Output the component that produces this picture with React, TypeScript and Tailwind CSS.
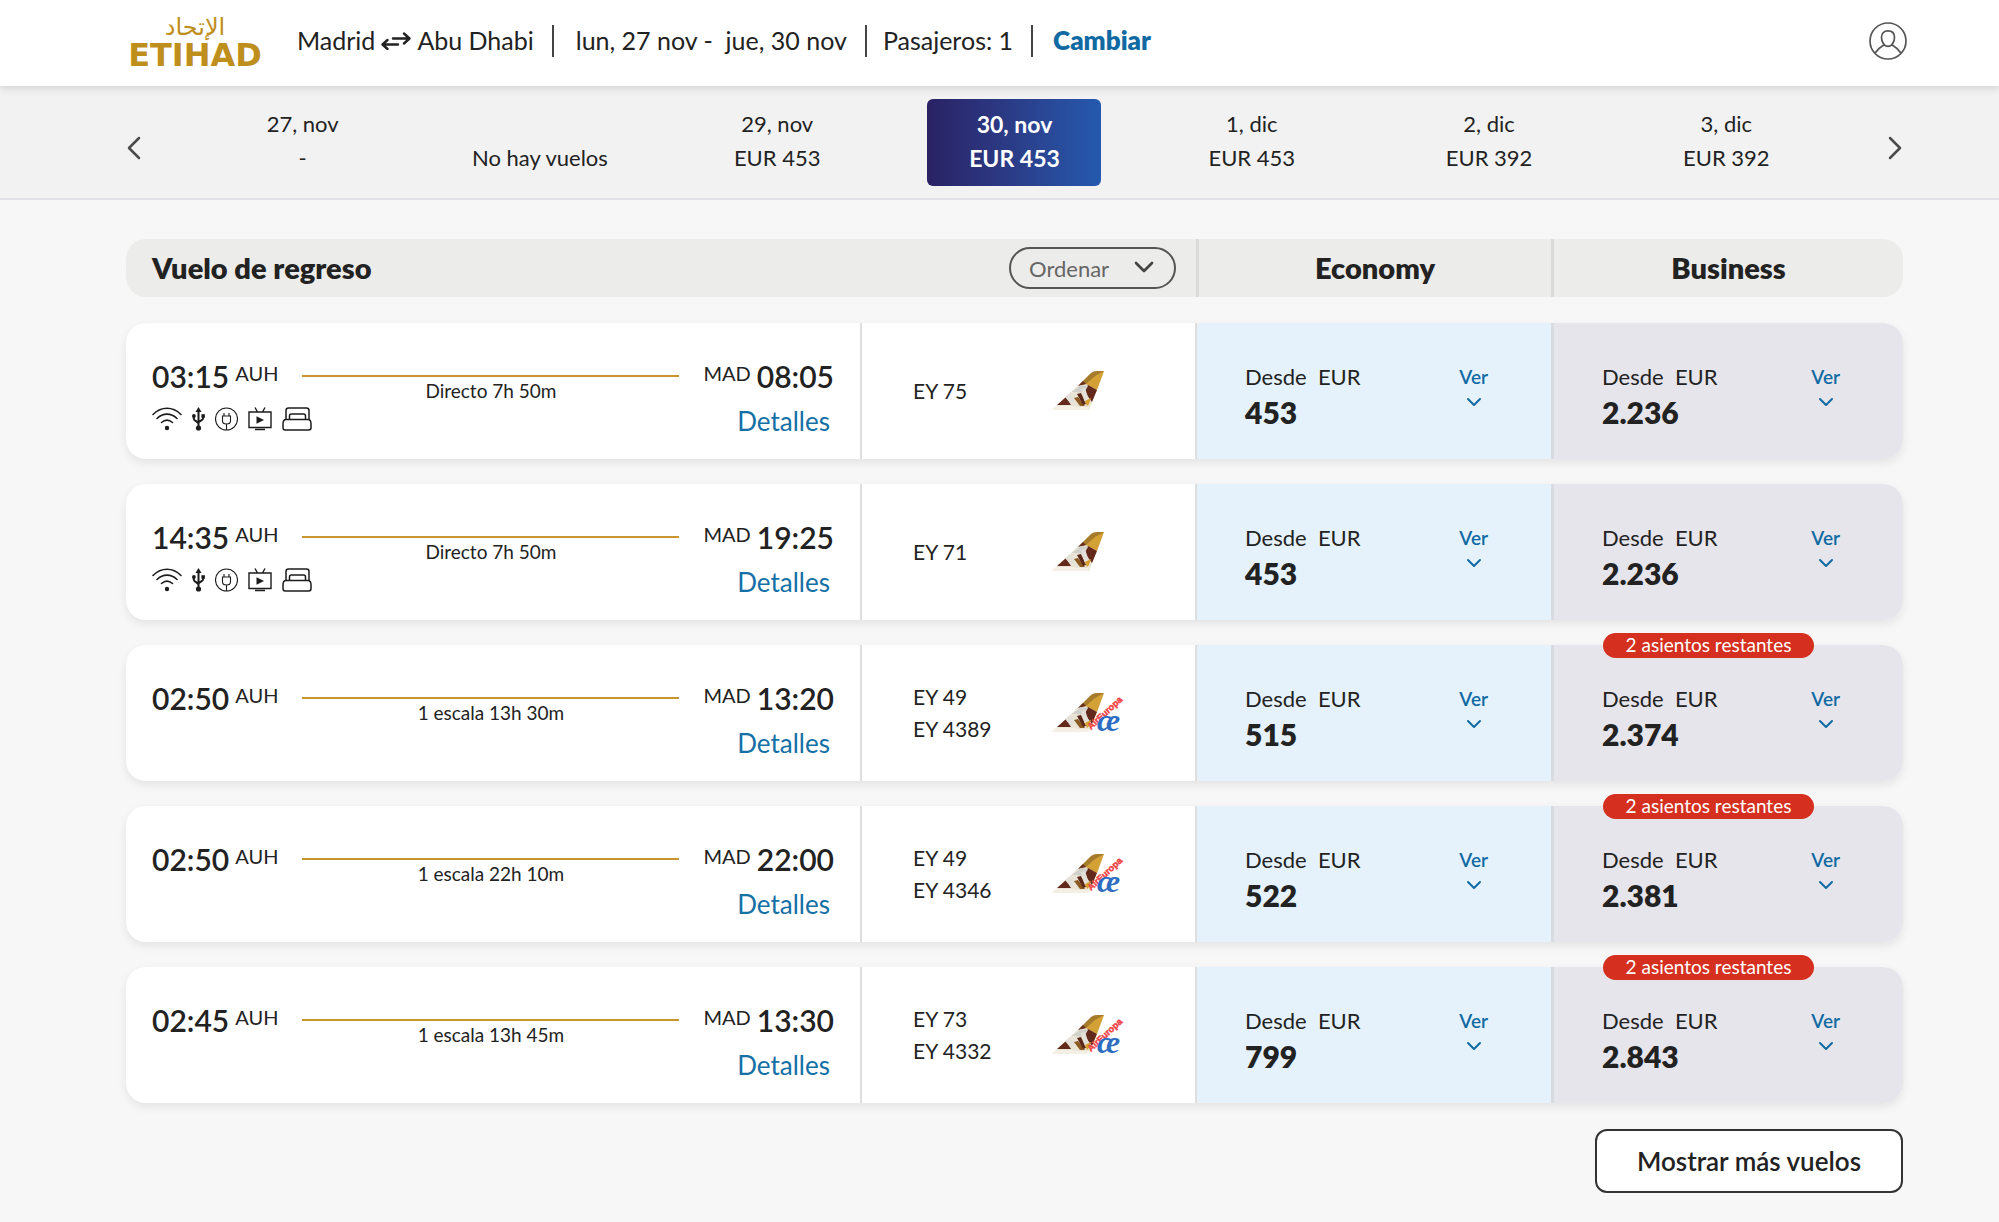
import { ChevronDown, ChevronLeft, ChevronRight } from "lucide-react"

type Flight = {
  departs: string
  arrives: string
  duration: string
  codes: string[]
  amenities?: boolean
  partner?: boolean
  economy: string
  business: string
  seatsLeft?: string
}

const days = [
  { label: "27, nov", price: "-" },
  { label: "", price: "No hay vuelos" },
  { label: "29, nov", price: "EUR 453" },
  { label: "30, nov", price: "EUR 453", selected: true },
  { label: "1, dic", price: "EUR 453" },
  { label: "2, dic", price: "EUR 392" },
  { label: "3, dic", price: "EUR 392" },
]

const flights: Flight[] = [
  {
    departs: "03:15",
    arrives: "08:05",
    duration: "Directo 7h 50m",
    codes: ["EY 75"],
    amenities: true,
    economy: "453",
    business: "2.236",
  },
  {
    departs: "14:35",
    arrives: "19:25",
    duration: "Directo 7h 50m",
    codes: ["EY 71"],
    amenities: true,
    economy: "453",
    business: "2.236",
  },
  {
    departs: "02:50",
    arrives: "13:20",
    duration: "1 escala 13h 30m",
    codes: ["EY 49", "EY 4389"],
    partner: true,
    economy: "515",
    business: "2.374",
    seatsLeft: "2 asientos restantes",
  },
  {
    departs: "02:50",
    arrives: "22:00",
    duration: "1 escala 22h 10m",
    codes: ["EY 49", "EY 4346"],
    partner: true,
    economy: "522",
    business: "2.381",
    seatsLeft: "2 asientos restantes",
  },
  {
    departs: "02:45",
    arrives: "13:30",
    duration: "1 escala 13h 45m",
    codes: ["EY 73", "EY 4332"],
    partner: true,
    economy: "799",
    business: "2.843",
    seatsLeft: "2 asientos restantes",
  },
]

function Logo() {
  return (
    <a href="#" className="flex w-[146px] flex-col items-center pb-1 font-['DejaVu_Sans'] text-[#bf8f1d]">
      <span lang="ar" dir="rtl" className="text-2xl leading-8">
        الإتحاد
      </span>
      <span className="text-[32px] font-bold leading-6">ETIHAD</span>
    </a>
  )
}

function SwapIcon() {
  return (
    <svg viewBox="0 0 30 18" className="h-[18px] w-[30px]" fill="none" stroke="currentColor" strokeWidth="2.4" strokeLinecap="round" strokeLinejoin="round">
      <path d="M12 6.500H28M23 1.500l5.500 5L23 11.500" />
      <path d="M17 12.500H2M6.500 8L1.500 12.500l5 4.500" />
    </svg>
  )
}

function ProfileIcon() {
  return (
    <svg viewBox="0 0 38 38" className="size-[38px]" fill="none" stroke="currentColor" strokeWidth="1.7">
      <circle cx="19" cy="19" r="18" />
      <path d="M19 8.800c4 0 6.500 2.500 6.500 6.600 0 4.300-2.600 9-6.500 9s-6.500-4.700-6.500-9c0-4.100 2.500-6.600 6.500-6.600z" />
      <path d="M15.500 22.500C12 24.500 8.500 27.500 6 31.200M22.500 22.500c3.500 2 7 5 9.500 8.700" />
    </svg>
  )
}

function Amenities() {
  return (
    <div className="flex items-center gap-2.5 text-[#1c1c1c]">
      <svg viewBox="0 0 30 24" className="h-6 w-[30px]" fill="none" stroke="currentColor" strokeWidth="1.6" strokeLinecap="round">
        <path d="M1 7.500C9.500-.8 20.500-.8 29 7.500M5 11.500c6-5.800 14-5.800 20 0M9.500 15.500c3.500-3 7.500-3 11 0" />
        <circle cx="15" cy="21" r="2.200" fill="currentColor" stroke="none" />
      </svg>
      <svg viewBox="0 0 13 24" className="h-6 w-[13px]" fill="none" stroke="currentColor" strokeWidth="2">
        <path d="M6.500 3v17M1.800 9v2.500c0 3 4.700 2.500 4.700 5.500M11.200 9v2c0 3-4.700 2.500-4.700 5" />
        <path d="M6.500 0l3 5h-6z" fill="currentColor" stroke="none" />
        <circle cx="6.500" cy="21" r="2.600" fill="currentColor" stroke="none" />
        <circle cx="1.900" cy="9" r="1.900" fill="currentColor" stroke="none" />
        <path d="M9.400 7.200h3.500v3.500H9.400z" fill="currentColor" stroke="none" />
      </svg>
      <svg viewBox="0 0 23 24" className="h-6 w-[23px]" fill="none" stroke="currentColor" strokeWidth="1.100">
        <circle cx="11.500" cy="12" r="11" />
        <path d="M9 9V6M14 9V6M7.500 9h8v5c0 2-1.500 3-4 3s-4-1-4-3zM11.500 17v6" />
      </svg>
      <svg viewBox="0 0 24 24" className="size-6" fill="none" stroke="currentColor" strokeWidth="1.400">
        <path d="M1 5h22v15.500H1zM7 .5L9.500 5M17 .5L14.500 5M7 22.500h10" />
        <path d="M8.500 9.200l7.500 3.800-7.500 3.800z" fill="currentColor" stroke="none" />
      </svg>
      <svg viewBox="0 0 30 24" className="h-6 w-[30px]" fill="none" stroke="currentColor" strokeWidth="1.500">
        <path d="M4 12.500V3.500c0-1.500.8-2.500 2.500-2.500h18c1.500 0 2.500 1 2.500 2.500v9" />
        <path d="M7.500 12.500V9c0-1.200.6-2 1.800-2h12.400c1.200 0 1.800.8 1.800 2v3.500" />
        <path d="M4 12.500h22c2 0 3 2 3 4.500v3.500c0 1.500-.7 2.500-2.200 2.500H3.200C1.700 23 1 22 1 20.500V17c0-2.500 1-4.500 3-4.500z" />
      </svg>
    </div>
  )
}

function Tails({ partner }: { partner?: boolean }) {
  return (
    <svg viewBox="0 0 80 40" className="h-10 w-20 overflow-visible">
      <path d="M0 39L38 3c2-2 4-3 7-3h7L37 39z" fill="#e9e4d6" />
      <path d="M27 14L38 3c2-2 4-3 7-3h7l-4 4-13 9z" fill="#a67c2c" />
      <path d="M52 0l-7 19-11-6 9-8z" fill="#d3a135" />
      <path d="M34 13l-8 2 5-5z" fill="#6b2f1d" />
      <path d="M36 14l9 5-5 12-8-11z" fill="#63291a" />
      <path d="M20 21l9-7 7 1-4 7-7-1z" fill="#d2d0ca" />
      <path d="M5 34l9-8 5 8z" fill="#63291a" />
      <path d="M13 26l5-4 5 6-4 5z" fill="#e4e1d9" />
      <path d="M22 27l4-1 7 9h-5z" fill="#8b5a20" />
      <path d="M25 23l4-1 5 11-3 1z" fill="#5a2718" />
      <path d="M29 18l4-1 4 12-4 2z" fill="#e3e0da" />
      <path d="M33 30l6-3-2 6-2 2z" fill="#d99f2a" />
      <path d="M0 39l4-4h16l8 1h9l-1 3z" fill="#f3efe4" />
      {partner && (
        <>
          <path d="M35 39L50 17 76 1 62 39z" fill="#ffffff" fillOpacity="0.5" />
          <text x="39" y="37" transform="rotate(-43 39 37)" className="font-['Liberation_Sans'] text-[9px] font-bold" fill="#f04444" stroke="#f04444" strokeWidth="0.5">
            AirEuropa
          </text>
          <text x="45" y="38" className="font-['Liberation_Serif'] text-[32px] font-bold italic" fill="#2e6cc0">
            æ
          </text>
        </>
      )}
    </svg>
  )
}

function Fare({ price }: { price: string }) {
  return (
    <div className="flex items-start justify-between pl-12 pr-[63px] pt-9">
      <div>
        <p className="whitespace-pre text-[22px] leading-9">Desde  EUR</p>
        <p className="text-[30px] font-extrabold leading-[34px]">{price}</p>
      </div>
      <button type="button" className="flex flex-col items-center pt-[5px] text-[#0f6aa3]">
        <span className="text-[19px] font-semibold leading-[26px]">Ver</span>
        <ChevronDown className="size-6" strokeWidth={2} />
      </button>
    </div>
  )
}

function FlightCard({ flight }: { flight: Flight }) {
  return (
    <li className="grid h-[136px] grid-cols-[736fr_335fr_357fr_349fr] rounded-[20px] bg-white shadow-[0_4px_10px_rgba(0,0,0,0.08)]">
      <div className="border-r-2 border-[#dedede] px-[26px] pt-[35px]">
        <div className="flex items-start">
          <span className="text-[30px] font-semibold leading-9">{flight.departs}</span>
          <span className="ml-1.5 text-[20px] leading-[30px]">AUH</span>
          <div className="mx-6 mt-[17px] flex-1 border-t-2 border-[#c8962c] pt-0.5 text-center text-[19px] leading-6">
            {flight.duration}
          </div>
          <span className="mr-1.5 text-[20px] leading-[30px]">MAD</span>
          <span className="text-[30px] font-semibold leading-9">{flight.arrives}</span>
        </div>
        <div className="flex items-start justify-between pt-1">
          {flight.amenities ? <Amenities /> : <span />}
          <a href="#" className="pr-1 text-[26px] leading-7 text-[#1570a6]">
            Detalles
          </a>
        </div>
      </div>

      <div className="flex items-center border-r-2 border-[#dedede] pl-[51px]">
        <div className="w-[139px] text-[21px] leading-8">
          {flight.codes.map((code) => (
            <p key={code}>{code}</p>
          ))}
        </div>
        <Tails partner={flight.partner} />
      </div>

      <div className="border-r-[3px] border-[#d8dbe0] bg-[#e5f2fb]">
        <Fare price={flight.economy} />
      </div>

      <div className="relative rounded-r-[20px] bg-[#e6e5eb]">
        <Fare price={flight.business} />
        {flight.seatsLeft && (
          <span className="absolute -top-3 left-[49px] flex h-[25px] w-[211px] items-center justify-center rounded-full bg-[#d5301f] text-[19px] text-white">
            {flight.seatsLeft}
          </span>
        )}
      </div>
    </li>
  )
}

export default function App() {
  return (
    <div className="min-h-screen bg-[#f7f7f7] font-[Lato,sans-serif] text-[#222222]">
      <header className="relative flex h-[86px] items-center bg-white pb-[5px] pl-[122px] pr-[92px] text-[25px] shadow-[0_2px_8px_rgba(0,0,0,0.15)]">
        <Logo />
        <div className="ml-[29px] flex items-center">
          <span>Madrid</span>
          <span className="mx-1.5">
            <SwapIcon />
          </span>
          <span>Abu Dhabi</span>
          <span className="ml-[18px] mr-[22px] h-8 w-0.5 bg-[#444444]" />
          <span className="whitespace-pre">lun, 27 nov -  jue, 30 nov</span>
          <span className="ml-[18px] mr-4 h-8 w-0.5 bg-[#444444]" />
          <span>Pasajeros: 1</span>
          <span className="ml-[18px] mr-5 h-8 w-0.5 bg-[#444444]" />
          <a href="#" className="text-[26px] font-extrabold text-[#0f6aa3]">
            Cambiar
          </a>
        </div>
        <button type="button" aria-label="Mi cuenta" className="ml-auto text-[#555555]">
          <ProfileIcon />
        </button>
      </header>

      <nav className="flex h-[114px] items-center border-b-2 border-[#e2e2e8] bg-[#f2f2f2] pl-[114px] pr-[84px]">
        <button type="button" aria-label="Días anteriores" className="pt-3 text-[#4a4a4a]">
          <ChevronLeft className="size-10" strokeWidth={1.5} />
        </button>
        <div className="mx-[30px] grid flex-1 grid-cols-7 justify-items-center">
          {days.map((day) => (
            <button
              key={day.label}
              type="button"
              className={
                day.selected
                  ? "h-[87px] w-[174px] rounded-md bg-linear-to-r from-[#292265] to-[#2459ae] pb-0.5 text-[23px] font-bold leading-[34px] text-white"
                  : "h-[87px] w-[174px] pb-0.5 text-[22px] leading-[34px]"
              }
            >
              <span className="block h-[34px]">{day.label}</span>
              <span className="block">{day.price}</span>
            </button>
          ))}
        </div>
        <button type="button" aria-label="Días siguientes" className="pt-3 text-[#4a4a4a]">
          <ChevronRight className="size-10" strokeWidth={1.5} />
        </button>
      </nav>

      <main className="pb-[30px] pl-[126px] pr-24 pt-[39px]">
        <div className="grid h-[58px] grid-cols-[1073fr_355fr_349fr] rounded-[20px] bg-[#ececea]">
          <div className="flex items-center justify-between border-r-[3px] border-[#dadada] pl-[26px] pr-5">
            <h1 className="text-[29px] font-extrabold">Vuelo de regreso</h1>
            <label className="relative">
              <span className="sr-only">Ordenar vuelos</span>
              <select className="block h-[42px] w-[167px] appearance-none rounded-full border-2 border-[#555555] pl-[18px] text-[22px] text-[#666666]">
                <option>Ordenar</option>
              </select>
              <ChevronDown className="pointer-events-none absolute right-4 top-1 size-8 text-[#444444]" strokeWidth={2} />
            </label>
          </div>
          <h2 className="flex items-center justify-center border-r-[3px] border-[#dadada] text-[29px] font-extrabold">Economy</h2>
          <h2 className="flex items-center justify-center text-[29px] font-extrabold">Business</h2>
        </div>

        <ul className="mt-[26px] space-y-[25px]">
          {flights.map((flight) => (
            <FlightCard key={flight.codes.join()} flight={flight} />
          ))}
        </ul>

        <div className="mt-[26px] flex justify-end">
          <button type="button" className="h-16 w-[308px] rounded-xl border-2 border-[#333333] bg-white text-[26px] font-semibold">
            Mostrar más vuelos
          </button>
        </div>
      </main>
    </div>
  )
}
